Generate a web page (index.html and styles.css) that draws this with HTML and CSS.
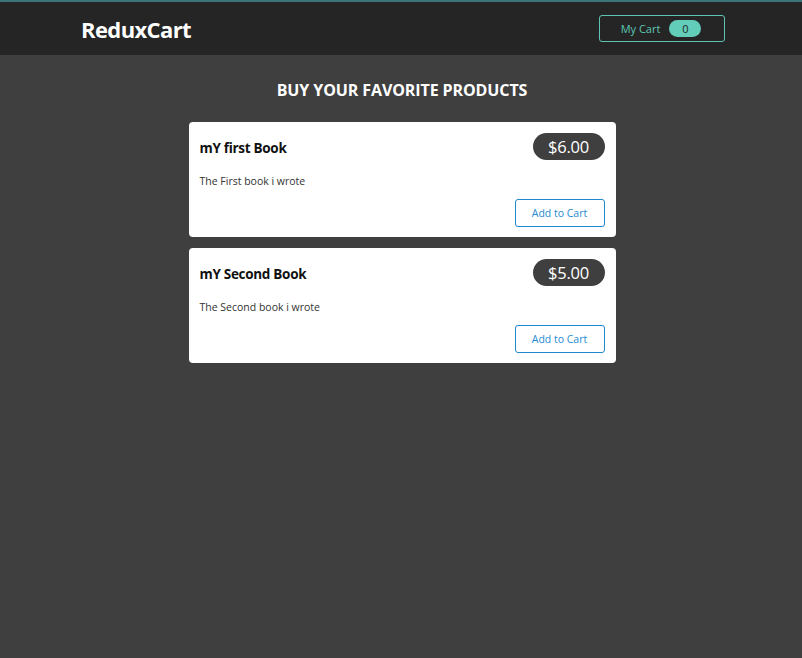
FILE: index.html
```html
<!DOCTYPE html>
<html>
<head>
<meta charset="utf-8">
<link rel="stylesheet" href="styles.css">
</head>
<body>
<header class="header">
  <div class="header-inner">
    <h1 class="logo">ReduxCart</h1>
    <button class="cart-btn"><span>My Cart</span><span class="badge">0</span></button>
  </div>
</header>
<main class="main">
  <h2 class="heading">BUY YOUR FAVORITE PRODUCTS</h2>
  <ul class="products">
    <li class="card">
      <div class="card-top">
        <h3 class="card-title">mY first Book</h3>
        <div class="price">$6.00</div>
      </div>
      <p class="desc">The First book i wrote</p>
      <div class="actions"><button class="add-btn">Add to Cart</button></div>
    </li>
    <li class="card">
      <div class="card-top">
        <h3 class="card-title">mY Second Book</h3>
        <div class="price">$5.00</div>
      </div>
      <p class="desc">The Second book i wrote</p>
      <div class="actions"><button class="add-btn">Add to Cart</button></div>
    </li>
  </ul>
</main>
</body>
</html>
```
FILE: styles.css
```css
* { box-sizing: border-box; }
html, body { margin: 0; padding: 0; }
body {
  background: #3f3f3f;
  font-family: "Open Sans", "Noto Sans", sans-serif;
  min-height: 658px;
}
.header {
  background: #252525;
  border-top: 2px solid #3d7479;
  height: 55px;
}
.header-inner {
  display: flex;
  align-items: center;
  justify-content: space-between;
  height: 53px;
  padding: 0 77px 0 81px;
}
.logo {
  margin: 0;
  color: #fff;
  font-size: 22px;
  font-weight: 700;
  letter-spacing: -0.6px;
}
.cart-btn {
  display: flex;
  align-items: center;
  justify-content: center;
  gap: 9px;
  width: 126px;
  height: 27px;
  margin-top: -1px;
  background: transparent;
  border: 1px solid #5ec5b4;
  border-radius: 3px;
  color: #5ec5b4;
  font-family: inherit;
  font-size: 11px;
  padding: 0 2px 0 0;
}
.badge {
  display: inline-block;
  background: #62cdb9;
  color: #252525;
  border-radius: 10px;
  width: 32px;
  height: 17px;
  line-height: 17px;
  font-size: 11px;
  text-align: center;
}
.main {
  width: 427px;
  margin: 0 auto;
  transform: translateX(1px);
}
.heading {
  margin: 24px 0 0;
  color: #fff;
  text-align: center;
  font-size: 16px;
  font-weight: 700;
  line-height: 22px;
  letter-spacing: -0.1px;
}
.products {
  list-style: none;
  margin: 21px 0 0;
  padding: 0;
  display: flex;
  flex-direction: column;
  gap: 11px;
}
.card {
  background: #fff;
  border-radius: 4px;
  padding: 11px 11px 10px;
  height: 115px;
}
.card-top {
  display: flex;
  justify-content: space-between;
  align-items: center;
  height: 27px;
}
.card-title {
  margin: 0;
  font-size: 13.5px;
  font-weight: 700;
  color: #111;
  letter-spacing: -0.3px;
  padding-top: 2px;
}
.price {
  background: #3f3f3f;
  color: #fff;
  border-radius: 14px;
  width: 72px;
  height: 27px;
  line-height: 27px;
  text-align: center;
  font-size: 16.5px;
  font-weight: 400;
  letter-spacing: -0.2px;
}
.desc {
  margin: 13px 0 0;
  font-size: 10.5px;
  color: #333;
  line-height: 16px;
}
.actions {
  display: flex;
  justify-content: flex-end;
  margin-top: 10px;
}
.add-btn {
  width: 90px;
  height: 28px;
  background: #fff;
  border: 1px solid #1f8ad0;
  border-radius: 3px;
  color: #1f8ad0;
  font-family: inherit;
  font-size: 10.5px;
  padding: 0;
}
```
